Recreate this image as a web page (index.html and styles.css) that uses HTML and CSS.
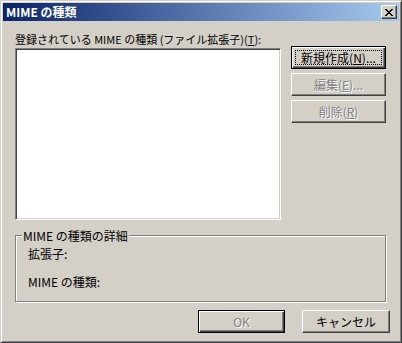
FILE: index.html
```html
<!DOCTYPE html>
<html lang="ja">

<head>
    <meta charset="UTF-8">
    <title>MIME の種類</title>
    <link rel="stylesheet" href="styles.css">
</head>

<body>
    <div class="window">
        <div class="titlebar">
            <span class="title">MIME の種類</span>
            <span class="close-btn">
                <svg width="8" height="7" viewBox="0 0 8 7">
                    <path fill="#000" d="M0 0h2v1H0zM6 0h2v1H6zM1 1h2v1H1zM5 1h2v1H5zM2 2h4v1H2zM3 3h2v1H3zM2 4h4v1H2zM1 5h2v1H1zM5 5h2v1H5zM0 6h2v1H0zM6 6h2v1H6z" />
                </svg>
            </span>
        </div>

        <div class="client">
            <div class="top">
                <label class="list-label">登録されている MIME の種類 (ファイル拡張子)(<u>T</u>):</label>
                <div class="listbox"></div>
                <div class="side-buttons">
                    <button class="btn default"><span class="focus">新規作成(<u>N</u>)...</span></button>
                    <button class="btn disabled">編集(<u>E</u>)...</button>
                    <button class="btn disabled">削除(<u>R</u>)</button>
                </div>
            </div>

            <div class="group">
                <span class="legend">MIME の種類の詳細</span>
                <div class="field">拡張子:</div>
                <div class="field">MIME の種類:</div>
            </div>

            <div class="footer">
                <button class="btn default disabled ok">OK</button>
                <button class="btn cancel">キャンセル</button>
            </div>
        </div>
    </div>
</body>

</html>
```

FILE: styles.css
```css
body {
    margin: 0;
    background: #d4d0c8;
    font-family: "Noto Sans CJK JP", "DejaVu Sans", sans-serif;
    font-size: 12px;
    color: #000;
}

.window {
    width: 402px;
    height: 343px;
    box-sizing: border-box;
    border: 1px solid;
    border-color: #d4d0c8 #404040 #404040 #d4d0c8;
    box-shadow: inset 1px 1px #fff, inset -1px -1px #808080;
    padding: 2px;
    background: #d4d0c8;
    display: flex;
    flex-direction: column;
}

.titlebar {
    height: 18px;
    display: flex;
    align-items: center;
    justify-content: space-between;
    padding: 0 2px 0 3px;
    background: linear-gradient(to right, #0a246a, #a6caf0);
}

.title {
    color: #fff;
    font-weight: bold;
    line-height: 14px;
}

.close-btn {
    width: 16px;
    height: 14px;
    box-sizing: border-box;
    display: flex;
    align-items: center;
    justify-content: center;
    background: #d4d0c8;
    border: 1px solid;
    border-color: #fff #404040 #404040 #fff;
    box-shadow: inset -1px -1px #808080;
}

.client {
    padding: 11px 9px 0 12px;
    display: flex;
    flex-direction: column;
}

.top {
    display: grid;
    grid-template-columns: 266px 95px;
    column-gap: 10px;
}

.list-label {
    grid-column: 1 / 3;
    font-size: 11px;
    line-height: 14px;
    margin-bottom: 2px;
    white-space: nowrap;
}

.listbox {
    height: 172px;
    box-sizing: border-box;
    background: #fff;
    border: 1px solid;
    border-color: #808080 #fff #fff #808080;
    box-shadow: inset 1px 1px #404040, inset -1px -1px #d4d0c8;
}

.side-buttons {
    margin-top: -2px;
    display: flex;
    flex-direction: column;
    gap: 4px;
}

.btn {
    height: 23px;
    box-sizing: border-box;
    padding: 0;
    font: inherit;
    color: #000;
    background: #d4d0c8;
    border: 1px solid;
    border-color: #fff #404040 #404040 #fff;
    box-shadow: inset -1px -1px #808080;
    display: flex;
    align-items: center;
    justify-content: center;
}

.btn.default {
    border-color: #000;
    box-shadow: inset 1px 1px #fff, inset -1px -1px #404040, inset -2px -2px #808080;
    padding: 3px;
}

.focus {
    flex: 1;
    align-self: stretch;
    display: flex;
    align-items: center;
    justify-content: center;
    border: 1px dotted #000;
}

.btn.disabled {
    color: #808080;
    text-shadow: 1px 1px #fff;
}

.group {
    position: relative;
    margin-top: 15px;
    width: 371px;
    height: 67px;
    box-sizing: border-box;
    border: 1px solid #808080;
    box-shadow: 1px 1px #fff, inset 1px 1px #fff;
    padding: 11px 0 0 12px;
    display: flex;
    flex-direction: column;
    gap: 15px;
}

.legend {
    position: absolute;
    top: -7px;
    left: 6px;
    padding: 0 1px;
    background: #d4d0c8;
    line-height: 13px;
}

.field {
    line-height: 13px;
}

.footer {
    margin-top: 8px;
    display: flex;
    justify-content: flex-end;
    gap: 17px;
}

.ok {
    width: 87px;
}

.cancel {
    width: 88px;
}
```
